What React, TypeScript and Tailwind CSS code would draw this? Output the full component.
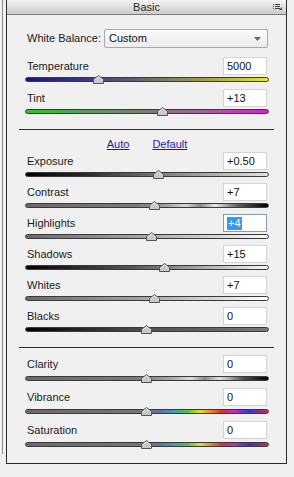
import React from 'react';

interface SliderProps {
  label: string;
  value: string;
  pos: number;
  track: string;
  gap?: string;
  selected?: boolean;
}

const TRACKS = {
  temp: 'bg-[linear-gradient(to_right,#16167a_0%,#3a3a82_25%,#6c6c6c_50%,#a0a050_75%,#e8e820_100%)]',
  tint: 'bg-[linear-gradient(to_right,#2cc42c_0%,#5a9a5a_25%,#7a7a7a_50%,#a060a0_75%,#e020c8_100%)]',
  exposure: 'bg-[linear-gradient(to_right,#000_0%,#2a2a2a_25%,#7a7a7a_55%,#e4e4e4_100%)]',
  contrast:
    'bg-[linear-gradient(to_right,#6a6a6a_0%,#7a7a7a_45%,#a0a0a0_58%,#d8d8d8_66%,#8a8a8a_72%,#e8e8e8_78%,#5a5a5a_88%,#000_100%)]',
  highlights: 'bg-[linear-gradient(to_right,#6a6a6a_0%,#9a9a9a_40%,#fafafa_100%)]',
  shadows: 'bg-[linear-gradient(to_right,#000_0%,#5a5a5a_45%,#fafafa_100%)]',
  whites: 'bg-[linear-gradient(to_right,#6a6a6a_0%,#a0a0a0_45%,#ffffff_100%)]',
  blacks: 'bg-[linear-gradient(to_right,#000_0%,#4a4a4a_45%,#7a7a7a_100%)]',
  clarity:
    'bg-[linear-gradient(to_right,#6a6a6a_0%,#7a7a7a_45%,#a8a8a8_60%,#dcdcdc_68%,#8a8a8a_74%,#e4e4e4_80%,#505050_90%,#000_100%)]',
  color:
    'bg-[linear-gradient(to_right,#6a6a6a_0%,#767676_48%,#5a74a8_56%,#3aa8a8_62%,#5ac040_67%,#e0e030_72%,#e08028_77%,#d83030_81%,#c030c0_86%,#3038c8_92%,#d02858_100%)]',
};

function Thumb({ left }: { left: number }) {
  return (
    <svg
      width="11"
      height="9"
      viewBox="0 0 11 9"
      className="absolute top-[-2px]"
      style={{ left: left - 5 }}
    >
      <path
        d="M0.5 8.5 L0.5 4.5 L5.5 0.5 L10.5 4.5 L10.5 8.5 Z"
        fill="#c8c8c8"
        stroke="#555"
        strokeWidth="1"
      />
      <path d="M1.5 5 L5.5 1.8 L9.5 5" fill="none" stroke="#e8e8e8" strokeWidth="1" />
    </svg>
  );
}

function SliderRow({ label, value, pos, track, gap = 'mt-[2px]', selected }: SliderProps) {
  return (
    <div className="flex flex-col">
      <div className="flex items-center justify-between h-[18px]">
        <span className="pl-[2px] text-[11px] text-[#1a1a1a]">{label}</span>
        <div
          className={`mr-[2px] w-[44px] h-[18px] bg-white border flex items-center pl-[3px] text-[11px] ${
            selected ? 'border-[#7f9db9]' : 'border-[#d4d4d4]'
          }`}
        >
          {selected ? (
            <span className="bg-[#3399ff] text-white leading-[13px] px-[1px]">{value}</span>
          ) : (
            <span className="text-[#111]">{value}</span>
          )}
        </div>
      </div>
      <div className={`relative h-[5px] ${gap}`}>
        <div className={`h-[5px] rounded-full border border-[#3a3a3a] ${track}`} />
        <Thumb left={pos - 25} />
      </div>
    </div>
  );
}

export default function App() {
  return (
    <div
      className="w-[294px] h-[477px] bg-[#f0f0f0] flex overflow-hidden"
      style={{ fontFamily: '"Liberation Sans", Arial, sans-serif' }}
    >
      <div className="w-[6px] shrink-0 pl-[2px]">
        <div className="w-px h-[454px] bg-[#8c8c8c]" />
      </div>

      <div className="w-[281px] h-[464px] shrink-0 border-l border-r border-b border-[#2c2c2c] bg-[#f0f0f0] flex flex-col">
        <div className="relative h-[15px] border-b border-[#7a7a7a] bg-[linear-gradient(to_bottom,#f4f4f4,#cbcbcb)] flex items-center justify-center">
          <span className="text-[11px] leading-[14px] text-[#2a2a2a]">Basic</span>
          <svg width="10" height="7" viewBox="0 0 10 7" className="absolute right-[3px] top-[4px]">
            <rect x="0" y="0" width="1" height="1" fill="#444" />
            <rect x="2" y="0" width="5" height="1" fill="#444" />
            <rect x="0" y="2" width="1" height="1" fill="#444" />
            <rect x="2" y="2" width="5" height="1" fill="#444" />
            <rect x="0" y="4" width="1" height="1" fill="#444" />
            <rect x="2" y="4" width="5" height="1" fill="#444" />
            <path d="M9 3 L9 6 L6 6 Z" fill="#444" />
          </svg>
        </div>

        <div className="pl-[18px] pr-[17px] flex flex-col">
          <div className="flex items-center mt-[14px] h-[19px]">
            <span className="pl-[2px] text-[11px] text-[#1a1a1a]">White Balance:</span>
            <div className="ml-auto mr-[1px] w-[164px] h-[19px] rounded-[2px] border border-[#a8a8a8] bg-[linear-gradient(to_bottom,#fafafa,#ececec)] flex items-center justify-between pl-[4px] pr-[6px]">
              <span className="text-[11px] text-[#111]">Custom</span>
              <svg width="7" height="4" viewBox="0 0 7 4">
                <path d="M0 0 L7 0 L3.5 4 Z" fill="#6a6a6a" />
              </svg>
            </div>
          </div>

          <div className="flex flex-col gap-[7px] mt-[9px]">
            <SliderRow label="Temperature" value="5000" pos={98} track={TRACKS.temp} />
            <SliderRow label="Tint" value="+13" pos={162} track={TRACKS.tint} />
          </div>
        </div>

        <div className="mx-[12px] mt-[15px] h-px bg-[#2c2c2c]" />

        <div className="pl-[18px] pr-[17px] flex flex-col">
          <div className="h-[22px] pt-[8px] flex justify-center gap-[23px] text-[11px] leading-[12px] text-[#1c1ca8]">
            <span className="underline">Auto</span>
            <span className="underline">Default</span>
          </div>

          <div className="flex flex-col gap-[6px]">
            <SliderRow label="Exposure" value="+0.50" pos={158} track={TRACKS.exposure} />
            <SliderRow label="Contrast" value="+7" pos={154} track={TRACKS.contrast} />
            <SliderRow label="Highlights" value="+4" pos={151} track={TRACKS.highlights} selected />
            <SliderRow label="Shadows" value="+15" pos={164} track={TRACKS.shadows} />
            <SliderRow label="Whites" value="+7" pos={154} track={TRACKS.whites} />
            <SliderRow label="Blacks" value="0" pos={146} track={TRACKS.blacks} />
          </div>
        </div>

        <div className="mx-[12px] mt-[15px] h-px bg-[#2c2c2c]" />

        <div className="pl-[18px] pr-[17px] flex flex-col gap-[7px] mt-[7px]">
          <SliderRow label="Clarity" value="0" pos={146} track={TRACKS.clarity} gap="mt-[3px]" />
          <SliderRow label="Vibrance" value="0" pos={146} track={TRACKS.color} gap="mt-[3px]" />
          <SliderRow label="Saturation" value="0" pos={146} track={TRACKS.color} gap="mt-[3px]" />
        </div>
      </div>
    </div>
  );
}
